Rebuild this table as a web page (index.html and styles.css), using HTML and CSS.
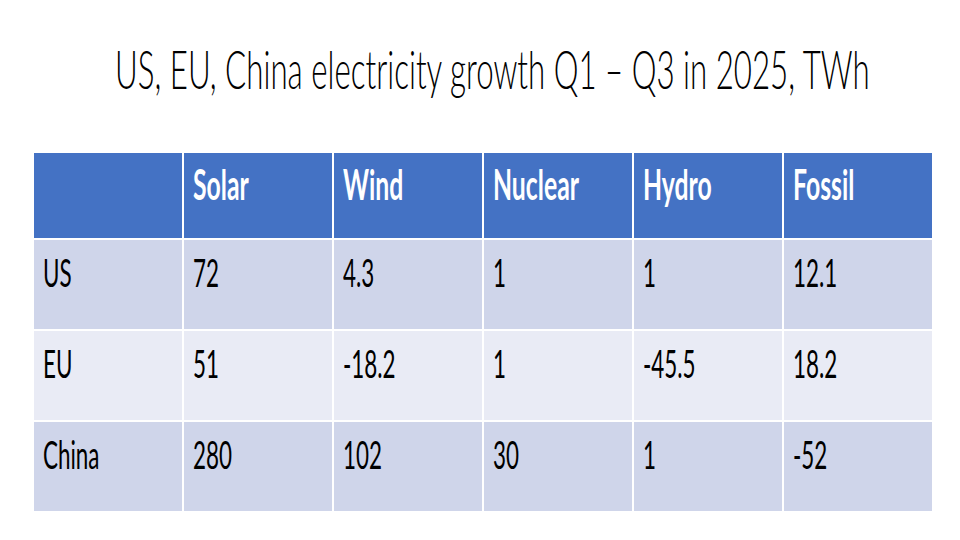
FILE: index.html
```html
<!DOCTYPE html>
<html lang="en">
<head>
<meta charset="utf-8">
<title>US, EU, China electricity growth</title>
<link rel="stylesheet" href="styles.css">
</head>
<body>
<div class="slide">
  <h1 class="title"><span class="tall">US, EU, China electricity growth Q1 – Q3 in 2025, TWh</span></h1>
  <div class="grid">
    <div class="cell head"></div>
    <div class="cell head"><span class="tall">Solar</span></div>
    <div class="cell head"><span class="tall">Wind</span></div>
    <div class="cell head"><span class="tall">Nuclear</span></div>
    <div class="cell head"><span class="tall">Hydro</span></div>
    <div class="cell head"><span class="tall">Fossil</span></div>

    <div class="cell odd"><span class="tall">US</span></div>
    <div class="cell odd"><span class="tall">72</span></div>
    <div class="cell odd"><span class="tall">4.3</span></div>
    <div class="cell odd"><span class="tall">1</span></div>
    <div class="cell odd"><span class="tall">1</span></div>
    <div class="cell odd"><span class="tall">12.1</span></div>

    <div class="cell even"><span class="tall">EU</span></div>
    <div class="cell even"><span class="tall">51</span></div>
    <div class="cell even"><span class="tall">-18.2</span></div>
    <div class="cell even"><span class="tall">1</span></div>
    <div class="cell even"><span class="tall">-45.5</span></div>
    <div class="cell even"><span class="tall">18.2</span></div>

    <div class="cell odd"><span class="tall">China</span></div>
    <div class="cell odd"><span class="tall">280</span></div>
    <div class="cell odd"><span class="tall">102</span></div>
    <div class="cell odd"><span class="tall">30</span></div>
    <div class="cell odd"><span class="tall">1</span></div>
    <div class="cell odd"><span class="tall">-52</span></div>
  </div>
</div>
</body>
</html>
```
FILE: styles.css
```css
html, body {
  margin: 0;
  padding: 0;
  background: #ffffff;
}

body {
  width: 960px;
  height: 540px;
  overflow: hidden;
  font-family: Lato, "Open Sans", "Liberation Sans", sans-serif;
  color: #000000;
}

/* Text is set at a narrow size and stretched vertically,
   giving the tall, condensed look of the slide. */
.tall {
  display: block;
  white-space: nowrap;
  transform-origin: left top;
  transform: scaleY(1.695);
}

.slide {
  display: flex;
  flex-direction: column;
  padding: 43px 28px 0 34px;
}

.title {
  display: flex;
  align-items: flex-start;
  height: 69px;
  margin: 0;
  padding-left: 81px;
  font-size: calc(53px * 0.59);
  line-height: calc(53px * 0.59);
  font-weight: 300;
}

.grid {
  margin-top: 41px;
  width: 898px;
  display: grid;
  grid-template-columns: repeat(6, 1fr);
  grid-template-rows: 85px 89px 89px 89px;
  gap: 2px;
  background: #ffffff;
}

.cell {
  display: flex;
  align-items: flex-start;
  padding-left: 9px;
}

.head {
  background: #4472c4;
  color: #ffffff;
  font-weight: 700;
  font-size: calc(42px * 0.59);
  line-height: calc(42px * 0.59);
  padding-top: 11px;
}

.odd,
.even {
  font-size: calc(38px * 0.59);
  line-height: calc(38px * 0.59);
  padding-top: 15px;
}

.odd {
  background: #cfd5ea;
}

.even {
  background: #e9ebf5;
}
```
